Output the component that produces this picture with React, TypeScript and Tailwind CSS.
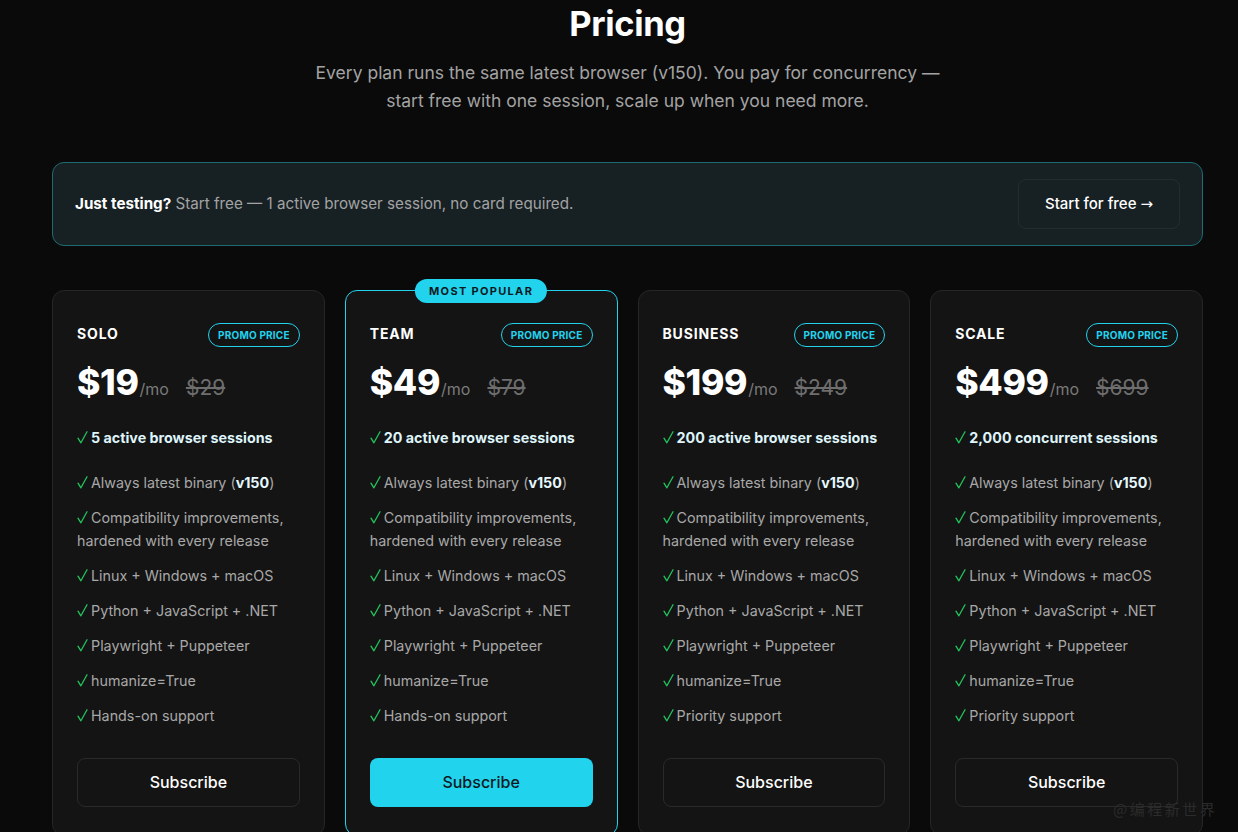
import React from "react";

type Plan = {
  name: string;
  price: string;
  was: string;
  sessions: string;
  support: string;
  popular?: boolean;
};

const plans: Plan[] = [
  { name: "SOLO", price: "$19", was: "$29", sessions: "5 active browser sessions", support: "Hands-on support" },
  { name: "TEAM", price: "$49", was: "$79", sessions: "20 active browser sessions", support: "Hands-on support", popular: true },
  { name: "BUSINESS", price: "$199", was: "$249", sessions: "200 active browser sessions", support: "Priority support" },
  { name: "SCALE", price: "$499", was: "$699", sessions: "2,000 concurrent sessions", support: "Priority support" },
];

function Check() {
  return (
    <svg
      width="11"
      height="13"
      viewBox="0 0 11 13"
      className="mr-[3px] inline-block align-[-1px]"
      fill="none"
      stroke="#22c55e"
      strokeWidth="1.3"
      strokeLinecap="round"
      strokeLinejoin="round"
    >
      <path d="M1 7.2 L3.9 11.8 L10 0.8" />
    </svg>
  );
}

function Feature({ children }: { children: React.ReactNode }) {
  return (
    <li className="text-[14.3px] leading-[23px] text-[#a8a8a8]">
      <Check />
      {children}
    </li>
  );
}

function PlanCard({ plan }: { plan: Plan }) {
  return (
    <div
      className={
        "relative flex flex-col rounded-[12px] border bg-[#141414] px-6 pt-[35px] pb-7 " +
        (plan.popular ? "border-[#22d3ee]" : "border-[#262626]")
      }
    >
      {plan.popular && (
        <div className="absolute left-1/2 top-[-12px] -translate-x-1/2 rounded-full bg-[#22d3ee] px-[14px] h-[24px] flex items-center text-[11px] font-bold tracking-[0.12em] text-[#0b1a1f] whitespace-nowrap">
          MOST POPULAR
        </div>
      )}
      <div className="flex items-start justify-between">
        <div className="text-[14px] font-bold tracking-[0.06em] text-white leading-[16px]">{plan.name}</div>
        <div className="mt-[-3px] rounded-full border border-[#22d3ee] px-[9px] h-[24px] flex items-center text-[10px] font-bold tracking-[0.02em] text-[#22d3ee]">
          PROMO PRICE
        </div>
      </div>
      <div className="mt-[16px] flex items-baseline">
        <span className="text-[35.5px] font-extrabold leading-[40px] text-white tracking-[-0.01em]">{plan.price}</span>
        <span className="ml-[1px] text-[16px] text-[#7a7a7a]">/mo</span>
        <span className="ml-[17px] text-[21px] text-[#6e6e6e] line-through decoration-[#6e6e6e]">{plan.was}</span>
      </div>
      <ul className="mt-[22px] flex flex-col gap-[12px]">
        <li className="mb-[10px] text-[14.3px] leading-[23px] font-bold text-[#dff4fb]">
          <Check />
          {plan.sessions}
        </li>
        <Feature>
          Always latest binary (<span className="font-bold text-[#e6f8ff]">v150</span>)
        </Feature>
        <Feature>Compatibility improvements, hardened with every release</Feature>
        <Feature>Linux + Windows + macOS</Feature>
        <Feature>Python + JavaScript + .NET</Feature>
        <Feature>Playwright + Puppeteer</Feature>
        <Feature>humanize=True</Feature>
        <Feature>{plan.support}</Feature>
      </ul>
      <button
        className={
          "mt-[31px] h-[49px] w-full rounded-[8px] text-[16px] font-medium " +
          (plan.popular ? "bg-[#22d3ee] text-[#0b1a1f]" : "border border-[#2a2a2a] text-white")
        }
      >
        Subscribe
      </button>
    </div>
  );
}

export default function App() {
  return (
    <div
      className="relative min-h-screen bg-[#0a0a0a] text-white overflow-hidden"
      style={{ fontFamily: "Inter, 'Noto Sans', 'Noto Sans CJK SC', sans-serif" }}
    >
      <div className="pl-[52px] pr-[35px]">
        <h1 className="pt-[3px] text-center text-[34.5px] font-bold leading-[42px] tracking-[-0.01em]">Pricing</h1>
        <p className="mx-auto mt-[14px] max-w-[645px] text-center text-[17.5px] leading-[28px] text-[#a3a3a3]">
          Every plan runs the same latest browser (v150). You pay for concurrency — start free with one session, scale up when you need more.
        </p>

        <div className="mt-[47px] flex h-[84px] items-center justify-between rounded-[12px] border border-[#1f6b74] bg-[#172023] pl-[22px] pr-[22px]">
          <p className="text-[15.2px] text-[#a3a3a3]">
            <span className="font-bold text-white">Just testing?</span> Start free — 1 active browser session, no card required.
          </p>
          <button className="h-[50px] w-[162px] rounded-[8px] border border-[#262b2c] text-[15px] font-medium text-white">
            Start for free <span style={{ fontFamily: "'DejaVu Sans', sans-serif" }}>→</span>
          </button>
        </div>

        <div className="mt-[44px] grid grid-cols-4 gap-[20px]">
          {plans.map((p) => (
            <PlanCard key={p.name} plan={p} />
          ))}
        </div>
      </div>
      <div
        className="absolute left-[1113px] top-[798px] text-[15px] tracking-[2.5px] text-[#2b2b2b] pointer-events-none"
        style={{ fontFamily: "'Noto Sans CJK SC', sans-serif" }}
      >
        @编程新世界
      </div>
    </div>
  );
}
